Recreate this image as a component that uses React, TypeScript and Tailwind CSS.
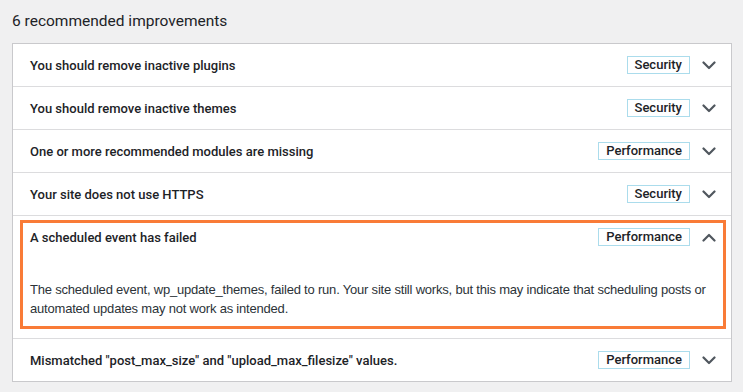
const ITEMS = [
  { title: "You should remove inactive plugins", badge: "Security" },
  { title: "You should remove inactive themes", badge: "Security" },
  { title: "One or more recommended modules are missing", badge: "Performance" },
  { title: "Your site does not use HTTPS", badge: "Security" },
  {
    title: "A scheduled event has failed",
    badge: "Performance",
    open: true,
    body: "The scheduled event, wp_update_themes, failed to run. Your site still works, but this may indicate that scheduling posts or automated updates may not work as intended.",
  },
  { title: 'Mismatched "post_max_size" and "upload_max_filesize" values.', badge: "Performance" },
];

function Chevron({ up }: { up?: boolean }) {
  return (
    <svg width="14" height="9" viewBox="0 0 14 9" fill="none" stroke="#50575e" strokeWidth="2.2" strokeLinecap="round" strokeLinejoin="round" className="ml-[12px] shrink-0">
      <path d={up ? "M1.5 7.5 7 2l5.5 5.5" : "M1.5 1.5 7 7l5.5-5.5"} />
    </svg>
  );
}

export default function App() {
  return (
    <div className="h-[392px] w-[743px] bg-[#f0f0f1] pl-[12px] pr-[11px] pt-[10px] font-['Roboto',sans-serif] text-[#1d2327]">
      <h2 className="mb-[11px] text-[15.5px] leading-[22px] font-normal">
        {ITEMS.length} recommended improvements
      </h2>
      <div className="border border-[#c9c9cc] bg-white">
        {ITEMS.map((item, i) => (
          <div key={i} className={`relative ${i > 0 ? "border-t border-[#dcdcde]" : ""}`}>
            <div className="flex h-[42px] items-center pl-[17px] pr-[15px]">
              <span className="flex-1 pt-px text-[13px] font-medium">{item.title}</span>
              <span className="flex h-[18px] items-center border border-[#abdcec] px-[7px] text-[13px] font-medium text-[#1d2327]">
                {item.badge}
              </span>
              <Chevron up={item.open} />
            </div>
            {item.open && (
              <>
                <p className="pb-[20px] pl-[17px] pr-[10px] pt-[22px] font-['Liberation_Sans',sans-serif] text-[13px] leading-[19px] tracking-[-0.2px] text-[#2c3338]">
                  {item.body}
                </p>
                <span className="pointer-events-none absolute bottom-[9px] left-[7px] right-[5px] top-[4px] border-[3px] border-[#f97b37]" />
              </>
            )}
          </div>
        ))}
      </div>
    </div>
  );
}
